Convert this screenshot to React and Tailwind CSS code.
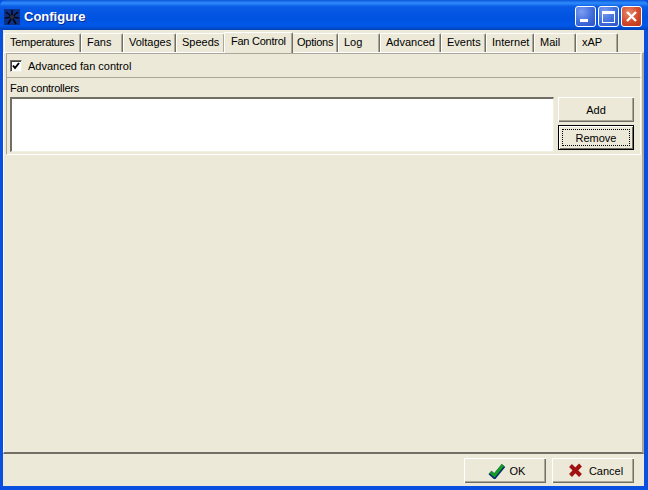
const tabs = [
  { label: 'Temperatures', width: 'w-[77px]', tight: true },
  { label: 'Fans', width: 'w-[42px]' },
  { label: 'Voltages', width: 'w-[53px]' },
  { label: 'Speeds', width: 'w-[49px]' },
  { label: 'Fan Control', width: 'w-[69px]', active: true, tight: true },
  { label: 'Options', width: 'w-[46px]', tight: true, inset: 'pl-[4px]' },
  { label: 'Log', width: 'w-[42px]' },
  { label: 'Advanced', width: 'w-[61px]' },
  { label: 'Events', width: 'w-[45px]' },
  { label: 'Internet', width: 'w-[48px]' },
  { label: 'Mail', width: 'w-[42px]' },
  { label: 'xAP', width: 'w-[42px]' },
]

const raised = 'bg-[#ece9d8] shadow-[inset_1px_1px_0_#ffffff,inset_-1px_-1px_0_#716f64,inset_-2px_-2px_0_#aca899]'

function FanIcon() {
  return (
    <svg width="16" height="16" viewBox="0 0 16 16" className="bg-[#0c3088]">
      <g stroke="#05070d" strokeWidth="1.6">
        <path d="M8 8 L8 1" />
        <path d="M8 8 L14 3" />
        <path d="M8 8 L15 9" />
        <path d="M8 8 L12 15" />
        <path d="M8 8 L4 15" />
        <path d="M8 8 L1 9" />
        <path d="M8 8 L2 3" />
      </g>
      <circle cx="8" cy="8" r="2" fill="#2a3040" />
    </svg>
  )
}

function CaptionButton({ kind }) {
  const tone = kind === 'close'
    ? 'bg-[radial-gradient(circle_at_35%_30%,#e88a6e,#d2492a_55%,#b8331a)]'
    : 'bg-[radial-gradient(circle_at_30%_25%,#7d9df0,#3f6ddc_55%,#2a4fc4)]'
  return (
    <div className={`w-[21px] h-[21px] rounded-[3px] border border-white flex items-center justify-center ${tone}`}>
      {kind === 'min' && <div className="w-[8px] h-[3px] bg-white mt-[8px] mr-[4px]" />}
      {kind === 'max' && <div className="w-[13px] h-[12px] border border-white border-t-[3px]" />}
      {kind === 'close' && (
        <svg width="13" height="13" viewBox="0 0 13 13">
          <path d="M2 2 L11 11 M11 2 L2 11" stroke="#fff" strokeWidth="2.4" />
        </svg>
      )}
    </div>
  )
}

function Tab({ label, width, active, tight, inset }) {
  const spacing = tight ? 'tracking-[-0.25px]' : ''
  if (active) {
    return (
      <div className={`${width} ${spacing} h-[21px] -mx-[1px] -mb-[1px] z-10 whitespace-nowrap rounded-t-[2px] bg-[#ece9d8] border-l border-l-white border-t border-t-white border-r border-r-[#716f64] shadow-[inset_-1px_0_0_#aca899] pl-[6px] pt-[1px]`}>
        {label}
      </div>
    )
  }
  return (
    <div className={`${width} ${spacing} ${inset || 'pl-[5px]'} h-[19px] whitespace-nowrap rounded-t-[2px] bg-[#ece9d8] border-l border-l-white border-t border-t-white border-r border-r-[#716f64] shadow-[inset_-1px_0_0_#aca899] pt-[1px]`}>
      {label}
    </div>
  )
}

export default function App() {
  return (
    <div className="w-[648px] h-[490px] flex flex-col overflow-hidden bg-[#0a50e0] font-['Liberation_Sans',sans-serif] text-[11px] leading-[14px] text-black">
      <div className="h-[30px] shrink-0 flex items-center pt-[3px] pl-[4px] pr-[6px] rounded-t-[6px] bg-[linear-gradient(180deg,#0a55d8_0%,#2f8cfb_10%,#0a5ce6_22%,#0053e0_60%,#0058ea_85%,#0042b8_100%)]">
        <FanIcon />
        <span className="ml-[4px] flex-1 font-bold text-[13px] text-white [text-shadow:1px_1px_0_#0a2a90]">Configure</span>
        <div className="flex gap-[2px]">
          <CaptionButton kind="min" />
          <CaptionButton kind="max" />
          <CaptionButton kind="close" />
        </div>
      </div>

      <div className="flex-1 flex flex-col ml-[3px] mr-[4px] mb-[4px] bg-[#ece9d8]">
        <div className="h-[22px] shrink-0 flex items-end pl-[1px]">
          {tabs.map((tab) => (
            <Tab key={tab.label} {...tab} />
          ))}
        </div>

        <div className="h-[402px] shrink-0 border-t border-t-white border-l border-l-white border-r-2 border-r-[#aca899] border-b-2 border-b-[#716f64] pl-[2px] pr-[1px]">
          <div className="h-[24px] flex items-center gap-[6px] border-t border-t-[#aca899] border-l border-l-[#aca899] border-r border-r-white pl-[3px]">
            <div className="w-[12px] h-[12px] bg-white border-t border-l border-t-[#716f64] border-l-[#716f64] border-r border-b border-r-[#f1efe2] border-b-[#f1efe2] shadow-[inset_1px_1px_0_#404040] flex items-center justify-center">
              <svg width="8" height="8" viewBox="0 0 8 8">
                <path d="M1 3.5 L3 6 L7 1" fill="none" stroke="#000" strokeWidth="2" />
              </svg>
            </div>
            <span>Advanced fan control</span>
          </div>

          <div className="h-[78px] border-t border-t-[#aca899] border-l border-l-[#aca899] border-r border-r-white border-b border-b-white pl-[3px] pr-[6px]">
            <div className="h-[19px] pt-[3px] tracking-[-0.25px]">Fan controllers</div>
            <div className="flex gap-[4px]">
              <div className="w-[544px] h-[55px] bg-white border-t-2 border-t-[#716f64] border-l-2 border-l-[#716f64] border-r border-r-[#f1efe2] border-b border-b-[#f1efe2]" />
              <div className="flex-1 flex flex-col gap-[3px]">
                <div className={`h-[25px] flex items-center justify-center ${raised}`}>Add</div>
                <div className="h-[25px] p-[3px] bg-[#ece9d8] border border-black shadow-[inset_1px_1px_0_#ffffff,inset_-1px_-1px_0_#716f64]">
                  <div className="h-full border border-dotted border-black flex items-center justify-center">Remove</div>
                </div>
              </div>
            </div>
          </div>
        </div>

        <div className="flex-1 flex justify-end items-start gap-[6px] pt-[4px] pr-[10px]">
          <div className={`w-[82px] h-[25px] flex items-center justify-center gap-[4px] pl-[3px] ${raised}`}>
            <svg width="18" height="16" viewBox="0 0 18 16">
              <path d="M2 9.5 L6.5 13.5 L15.5 2.5" fill="none" stroke="#0a2a70" strokeWidth="4.6" />
              <path d="M2.5 9 L6.5 12.5 L15 2" fill="none" stroke="#12a01e" strokeWidth="2.8" />
            </svg>
            <span>OK</span>
          </div>
          <div className={`w-[82px] h-[25px] flex items-center justify-center gap-[6px] pl-[5px] ${raised}`}>
            <svg width="15" height="15" viewBox="0 0 15 15">
              <path d="M2.5 2.5 L12.5 12.5 M12.5 2 L2.5 12.5" stroke="#a01212" strokeWidth="4" />
            </svg>
            <span>Cancel</span>
          </div>
        </div>
      </div>
    </div>
  )
}
